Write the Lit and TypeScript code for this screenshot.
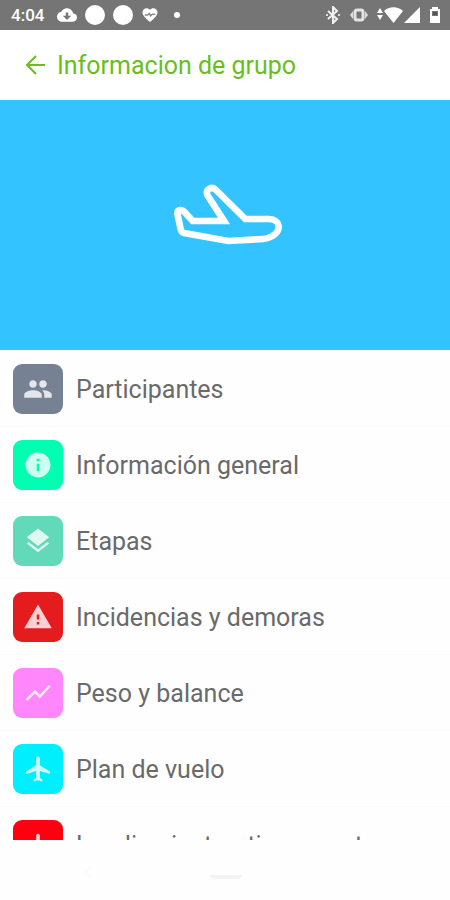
import { LitElement, html, css, svg } from "lit";
import { customElement } from "lit/decorators.js";
import { styleMap } from "lit/directives/style-map.js";

const items = [
  {
    label: "Participantes",
    color: "#768294",
    icon: svg`<path d="M16 11c1.66 0 2.99-1.34 2.99-3S17.66 5 16 5s-3 1.34-3 3 1.34 3 3 3zm-8 0c1.66 0 2.99-1.34 2.99-3S9.66 5 8 5 5 6.34 5 8s1.34 3 3 3zm0 2c-2.33 0-7 1.17-7 3.5V19h14v-2.5c0-2.33-4.67-3.5-7-3.5zm8 0c-.29 0-.62.02-.97.05 1.16.84 1.97 1.97 1.97 3.45V19h6v-2.5c0-2.33-4.67-3.5-7-3.5z"/>`,
  },
  {
    label: "Información general",
    color: "#00ffb0",
    icon: svg`<path d="M12 2C6.48 2 2 6.48 2 12s4.48 10 10 10 10-4.48 10-10S17.52 2 12 2zm1 15h-2v-6h2v6zm0-8h-2V7h2v2z"/>`,
  },
  {
    label: "Etapas",
    color: "#62d9b8",
    icon: svg`<path d="M11.99 18.54l-7.37-5.73L3 14.07l9 7 9-7-1.63-1.27-7.38 5.74zM12 16l7.36-5.73L21 9l-9-7-9 7 1.63 1.27L12 16z"/>`,
  },
  {
    label: "Incidencias y demoras",
    color: "#e51c1e",
    icon: svg`<path d="M1 21h22L12 2 1 21zm12-3h-2v-2h2v2zm0-4h-2v-4h2v4z"/>`,
  },
  {
    label: "Peso y balance",
    color: "#ff86fb",
    icon: svg`<path d="M3.5 18.49l6-6.01 4 4L22 6.92l-1.41-1.41-7.09 7.97-4-4L2 16.99z"/>`,
  },
  {
    label: "Plan de vuelo",
    color: "#00efff",
    icon: svg`<path d="M21 16v-2l-8-5V3.500c0-.83-.67-1.500-1.500-1.500S10 2.670 10 3.500V9l-8 5v2l8-2.500V19l-2 1.500V22l3.500-1 3.500 1v-1.500L13 19v-5.500l8 2.500z" transform="translate(0.5 0)"/>`,
  },
  {
    label: "Landing instruction report",
    color: "#ff0010",
    icon: svg`<path d="M10.500 4q1.500-2 3 0v9l8 5v2l-8-3v3l3 2v1l-4-1-4 1v-1l3-2v-3l-8 3v-2l7-5z"/>`,
  },
];

@customElement("app-root")
export class AppRoot extends LitElement {
  static styles = css`
    :host {
      display: flex;
      flex-direction: column;
      height: 100vh;
      overflow: hidden;
      background: #fefefe;
      font-family: Roboto, "Liberation Sans", sans-serif;
      color: #6a6a6a;
    }
    svg {
      display: block;
      flex: none;
    }
    .status {
      display: flex;
      align-items: center;
      justify-content: space-between;
      flex: none;
      height: 30px;
      padding: 0 9px 0 11px;
      background: #757575;
      color: #fff;
      fill: #fff;
    }
    .side {
      display: flex;
      align-items: center;
      gap: 8px;
    }
    .time {
      font-size: 17px;
      font-weight: 500;
      margin-right: 5px;
    }
    .bar {
      display: flex;
      align-items: center;
      flex: none;
      height: 70px;
      box-sizing: border-box;
      gap: 8px;
      padding: 2px 23px 0;
      background: #fff;
      color: #69be1c;
    }
    .back {
      padding: 0;
      border: 0;
      background: none;
      color: inherit;
      cursor: pointer;
    }
    h1 {
      margin: 0;
      font-size: 25px;
      line-height: 32px;
      font-weight: 400;
    }
    .hero {
      display: flex;
      align-items: center;
      justify-content: center;
      flex: none;
      height: 250px;
      background: #33c4ff;
    }
    .list {
      flex: 1;
      min-height: 0;
      overflow: hidden;
      margin: 0;
      padding: 1px 0 0;
      list-style: none;
    }
    .row {
      display: flex;
      align-items: center;
      gap: 13px;
      height: 76px;
      box-sizing: border-box;
      padding: 0 13px;
      border-bottom: 1px solid #fafafa;
      color: inherit;
      text-decoration: none;
      font-size: 25px;
      line-height: 32px;
      white-space: nowrap;
    }
    .label {
      padding-top: 3px;
    }
    .tile {
      display: flex;
      align-items: center;
      justify-content: center;
      flex: none;
      width: 50px;
      height: 50px;
      border-radius: 9px;
      fill: #fff;
      fill-opacity: 0.8;
    }
    .nav {
      display: flex;
      flex: none;
      height: 60px;
      box-sizing: border-box;
      padding: 26px 84px 0;
      background: #fefefe;
    }
    .home {
      margin: 0 auto;
      padding-right: 8px;
    }
  `;

  render() {
    return html`
      <div class="status">
        <div class="side">
          <span class="time">4:04</span>
          <svg width="20" height="20" viewBox="0 0 24 24"><path fill-rule="evenodd" d="M19.35 10.04C18.67 6.59 15.64 4 12 4 9.11 4 6.6 5.64 5.35 8.04 2.34 8.36 0 10.91 0 14c0 3.31 2.69 6 6 6h13c2.76 0 5-2.24 5-5 0-2.64-2.05-4.78-4.65-4.96zM10.5 9h3v4H17l-5 5-5-5h3.500z"/></svg>
          <svg width="20" height="20" viewBox="0 0 20 20"><circle cx="10" cy="10" r="10"/></svg>
          <svg width="20" height="20" viewBox="0 0 20 20"><circle cx="10" cy="10" r="10"/></svg>
          <svg width="18" height="18" viewBox="0 0 24 24"><path d="M12 21.35C5.4 15.36 2 12.28 2 8.5 2 5.42 4.42 3 7.5 3c1.74 0 3.41.81 4.5 2.09C13.09 3.81 14.76 3 16.5 3 19.58 3 22 5.42 22 8.5c0 3.78-3.4 6.86-10 12.85z"/><path d="M5 12h4l2-2 2 3 2-2h4" fill="none" stroke="#8a8a8a" stroke-width="2"/></svg>
          <svg width="20" height="20" viewBox="0 0 20 20"><circle cx="10" cy="10" r="3"/></svg>
        </div>
        <div class="side">
          <svg width="16" height="18" viewBox="0 0 16 18"><path d="M3 5l9 8-4 4V1l4 4-9 8" fill="none" stroke="#f2f2f2" stroke-width="2"/><circle cx="2" cy="9" r="1"/><circle cx="14" cy="9" r="1"/></svg>
          <svg width="20" height="18" viewBox="0 0 20 18"><path d="M1 9l3-4v8zM19 9l-3-4v8z" fill="#ddd"/><rect x="6" y="4" width="8" height="10" rx="2" fill="none" stroke="#e4e4e4" stroke-width="3"/></svg>
          <svg width="44" height="18" viewBox="0 0 44 18"><path d="M0 7l3-5 3 5zM0 9h6l-3 5zM7 5c5-5 14-5 19 0l-9.500 12zM43 1v16H27z"/></svg>
          <svg width="12" height="18" viewBox="0 0 12 18"><path fill-rule="evenodd" d="M3 1h6v2h2v14H1V3h2zM3 5v5h6V5z"/><path d="M4 6h4v3H4z" fill="#555"/></svg>
        </div>
      </div>
      <header class="bar">
        <button class="back" aria-label="Volver">
          <svg width="26" height="26" viewBox="0 0 26 26" fill="none" stroke="currentColor" stroke-width="2"><path d="M22 12H4M13 3l-9 9 9 9"/></svg>
        </button>
        <h1>Informacion de grupo</h1>
      </header>
      <div class="hero">
        <svg width="140" height="90" viewBox="-15 30 420 270" fill="none" stroke="#fff" stroke-width="20"><path d="M52 130C52 118 66 118 73 125L98 153H192L142 75C136 56 156 48 168 60L256 147H325C362 147 366 182 337 198Q324 206 310 207L205 213 72 189Q64 187 62 178z"/></svg>
      </div>
      <ul class="list">
        ${items.map(
          (item) => html`<li>
            <a class="row" href="#">
              <span class="tile" style=${styleMap({ background: item.color })}>
                <svg width="30" height="30" viewBox="0 0 24 24" aria-hidden="true">${item.icon}</svg>
              </span>
              <span class="label">${item.label}</span>
            </a>
          </li>`
        )}
      </ul>
      <div class="nav">
        <svg width="9" height="13" viewBox="0 0 9 13" fill="none" stroke="#f8f8f8"><path d="M8 1L1 6l7 6"/></svg>
        <div class="home">
          <svg width="36" height="16" viewBox="0 0 36 16"><path d="M1 9h34q-2 4-6 4H7q-4 0-6-4z" fill="#f3f3f3"/></svg>
        </div>
      </div>
    `;
  }
}
